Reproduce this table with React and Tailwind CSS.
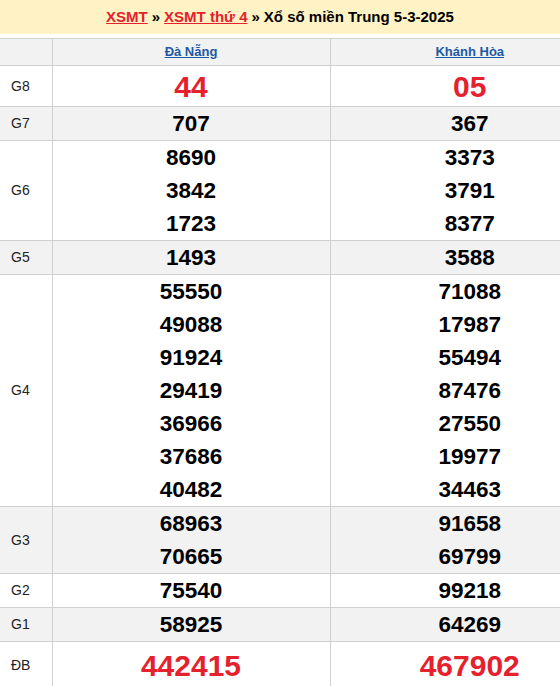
const rows = [
  { label: 'G8', a: ['44'], b: ['05'], big: true, h: 'h-[40px]' },
  { label: 'G7', a: ['707'], b: ['367'], alt: true },
  { label: 'G6', a: ['8690', '3842', '1723'], b: ['3373', '3791', '8377'] },
  { label: 'G5', a: ['1493'], b: ['3588'], alt: true },
  {
    label: 'G4',
    a: ['55550', '49088', '91924', '29419', '36966', '37686', '40482'],
    b: ['71088', '17987', '55494', '87476', '27550', '19977', '34463'],
  },
  { label: 'G3', a: ['68963', '70665'], b: ['91658', '69799'], alt: true },
  { label: 'G2', a: ['75540'], b: ['99218'] },
  { label: 'G1', a: ['58925'], b: ['64269'], alt: true },
  { label: 'ĐB', a: ['442415'], b: ['467902'], big: true, h: 'h-[46px]' },
];

function Nums({ list, big, h }) {
  return (
    <div className="flex flex-col items-center">
      {list.map((n, i) =>
        big ? (
          <div key={i} className={`${h} flex items-center text-[30px] font-bold text-[#e4212d]`}>
            {n}
          </div>
        ) : (
          <div key={i} className="leading-[33px] text-[22.5px] font-bold text-black">
            {n}
          </div>
        )
      )}
    </div>
  );
}

export default function App() {
  return (
    <div className="w-[560px] overflow-hidden bg-white font-['Liberation_Sans',Arial,sans-serif]">
      <div className="h-[34px] bg-[#fff2c4] flex items-center justify-center text-[15px] font-bold text-black">
        <a href="#" className="text-[#e4212d] underline">XSMT</a>
        <span className="mx-[4px]">»</span>
        <a href="#" className="text-[#e4212d] underline">XSMT thứ 4</a>
        <span className="mx-[4px]">»</span>
        <span>Xổ số miền Trung 5-3-2025</span>
      </div>
      <table className="mt-[4px] w-[609px] max-w-none border-collapse">
        <thead>
          <tr className="bg-[#f2f2f2] h-[27px]">
            <th className="w-[52px] border border-[#d0d0d0] border-l-0"></th>
            <th className="w-[278px] border border-[#d0d0d0] text-[13px] font-bold">
              <a href="#" className="text-[#1d5aa6] underline">Đà Nẵng</a>
            </th>
            <th className="border border-[#d0d0d0] border-r-0 text-[13px] font-bold">
              <a href="#" className="text-[#1d5aa6] underline">Khánh Hòa</a>
            </th>
          </tr>
        </thead>
        <tbody>
          {rows.map((r) => (
            <tr key={r.label} className={r.alt ? 'bg-[#f2f2f2]' : 'bg-white'}>
              <td className="border border-[#d0d0d0] border-l-0 pl-[11px] text-[14px] text-[#222]">
                {r.label}
              </td>
              <td className="border border-[#d0d0d0] p-0">
                <Nums list={r.a} big={r.big} h={r.h} />
              </td>
              <td className="border border-[#d0d0d0] border-r-0 p-0">
                <Nums list={r.b} big={r.big} h={r.h} />
              </td>
            </tr>
          ))}
        </tbody>
      </table>
    </div>
  );
}
